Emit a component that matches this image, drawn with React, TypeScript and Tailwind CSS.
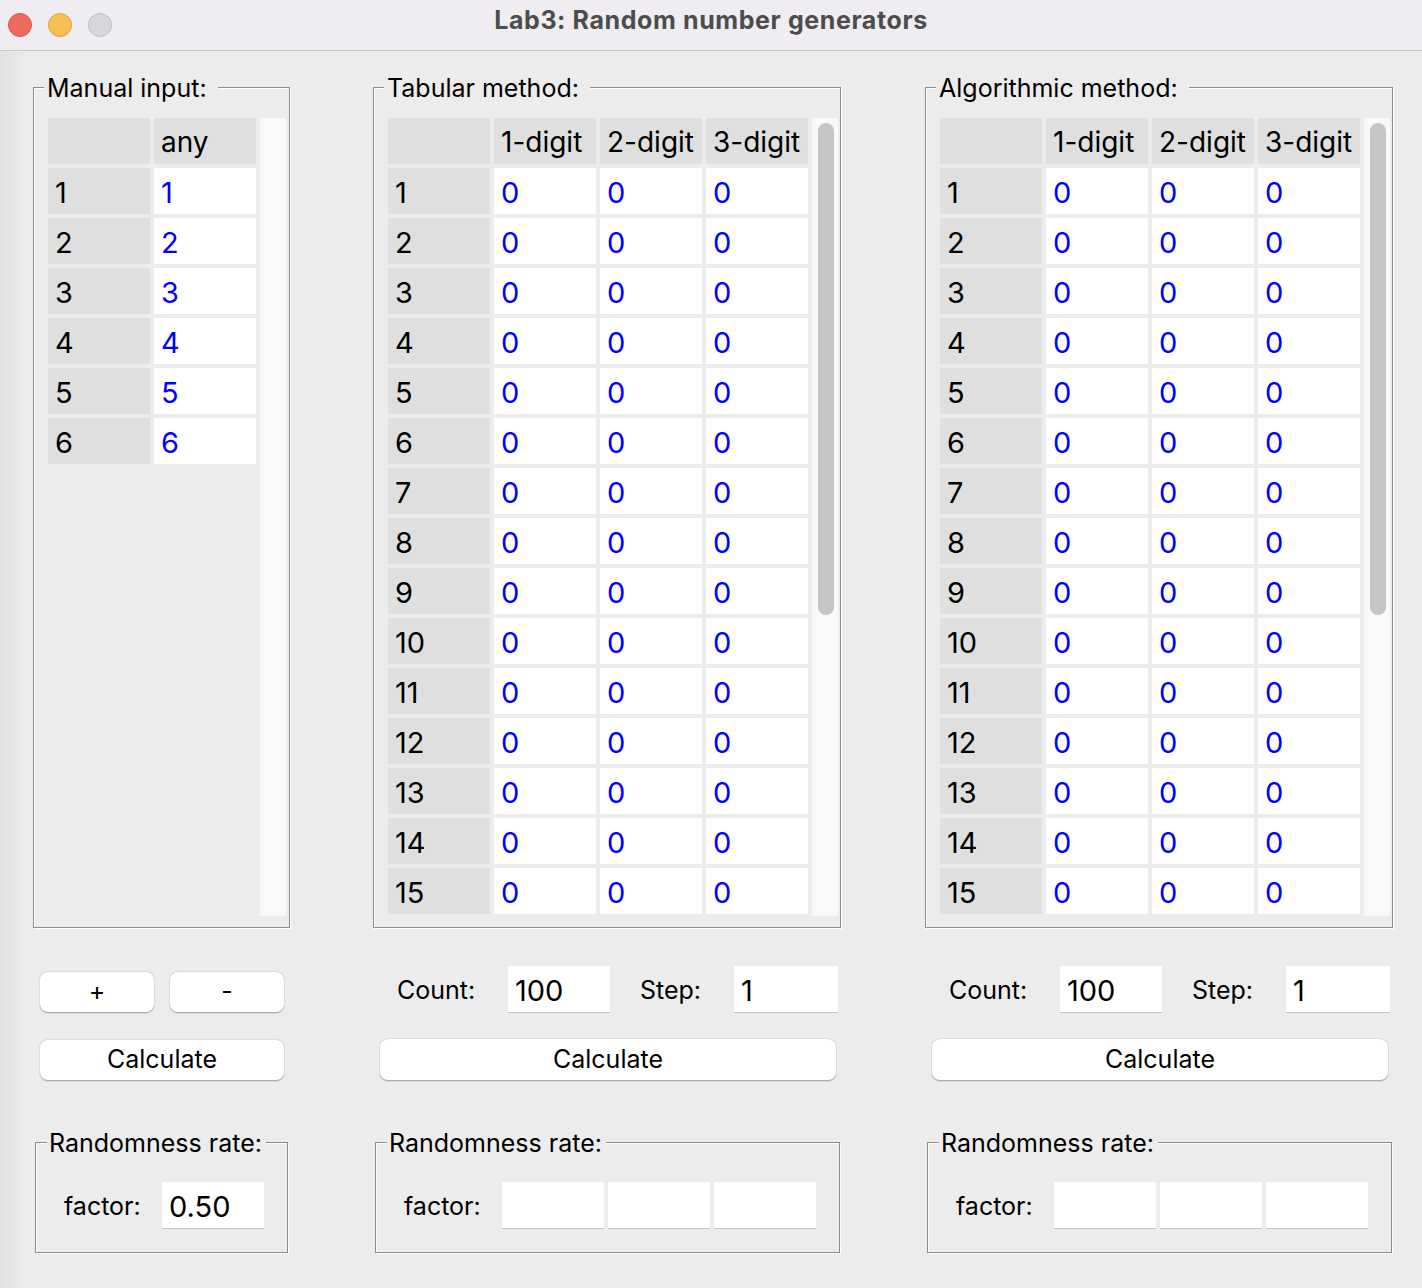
import React from "react";

const GROOVE =
  "border border-[#8c8c8c] shadow-[inset_1px_1px_0_#ffffff,1px_1px_0_#ffffff]";

function GroupBox({
  label,
  className,
  labelClass,
  children,
}: {
  label: string;
  className: string;
  labelClass: string;
  children: React.ReactNode;
}) {
  return (
    <div className={`relative ${GROOVE} ${className}`}>
      <span
        className={`absolute top-[-14px] bg-[#ececec] text-[25px] leading-[28px] text-black whitespace-nowrap ${labelClass}`}
      >
        {label}
      </span>
      {children}
    </div>
  );
}

function Cell({
  kind,
  children,
}: {
  kind: "head" | "index" | "data";
  children?: React.ReactNode;
}) {
  const bg = kind === "data" ? "bg-white text-[#0000ff]" : "bg-[#dfdfdf] text-black";
  return (
    <div className={`h-[46px] overflow-hidden pl-[7px] text-[29px] leading-[49px] ${bg}`}>
      {children}
    </div>
  );
}

function Table({
  headers,
  rows,
  thumb,
}: {
  headers: string[];
  rows: string[][];
  thumb: boolean;
}) {
  const cols = headers.length;
  const gridCols = cols === 2 ? "grid-cols-[102px_102px]" : "grid-cols-[102px_102px_102px_102px]";
  return (
    <div className="flex h-[798px]">
      <div className={`grid ${gridCols} auto-rows-[46px] gap-[4px] content-start h-[798px] overflow-hidden`}>
        <Cell kind="head" />
        {headers.slice(1).map((h) => (
          <div key={h} className="h-[46px] overflow-hidden pl-[7px] text-[28px] leading-[48px] bg-[#dfdfdf] text-black">
            {h}
          </div>
        ))}
        {rows.map((r, i) => (
          <React.Fragment key={i}>
            <Cell kind="index">{String(i + 1)}</Cell>
            {r.map((v, j) => (
              <Cell key={j} kind="data">
                {v}
              </Cell>
            ))}
          </React.Fragment>
        ))}
      </div>
      <div className="ml-[3px] w-[27px] h-[798px] bg-[#f9f9f9] border-l border-[#eeeeee] pt-[5px] pl-[6px]">
        {thumb && <div className="w-[16px] h-[492px] rounded-full bg-[#c5c5c5]" />}
      </div>
    </div>
  );
}

function Button({ className, children }: { className: string; children: React.ReactNode }) {
  return (
    <div
      className={`flex items-center justify-center bg-white rounded-[8px] shadow-[0_0.5px_1.5px_rgba(0,0,0,0.35)] text-[25px] text-black ${className}`}
    >
      {children}
    </div>
  );
}

function Field({ className, value }: { className: string; value?: string }) {
  return (
    <div
      className={`h-[46px] overflow-hidden bg-white pl-[7px] text-[29px] leading-[49px] text-black shadow-[0_1px_0.5px_rgba(0,0,0,0.18)] ${className}`}
    >
      {value}
    </div>
  );
}

function MethodColumn({ title, className }: { title: string; className: string }) {
  const rows = Array.from({ length: 15 }, () => ["0", "0", "0"]);
  return (
    <div className={`flex flex-col w-[468px] ${className}`}>
      <GroupBox label={title} className="w-[468px] h-[841px] pt-[30px] pl-[14px]" labelClass="left-[10px] pl-[3px] pr-[11px]">
        <Table headers={["", "1-digit", "2-digit", "3-digit"]} rows={rows} thumb />
      </GroupBox>
      <div className="flex items-center mt-[38px] h-[46px]">
        <span className="ml-[24px] w-[111px] pt-[3px] text-[25px] text-black">Count:</span>
        <Field className="w-[102px]" value="100" />
        <span className="ml-[30px] w-[94px] pt-[3px] text-[25px] text-black">Step:</span>
        <Field className="w-[104px]" value="1" />
      </div>
      <Button className="mt-[27px] ml-[7px] w-[456px] h-[41px]">Calculate</Button>
      <GroupBox label="Randomness rate:" className="mt-[62px] ml-[2px] w-[465px] h-[111px]" labelClass="left-[11px] pl-[2px] pr-[4px]">
        <div className="flex items-center pt-[39px]">
          <span className="ml-[28px] w-[98px] pt-[4px] text-[25px] text-black">factor:</span>
          <div className="flex gap-[4px]">
            <Field className="w-[102px]" />
            <Field className="w-[102px]" />
            <Field className="w-[102px]" />
          </div>
        </div>
      </GroupBox>
    </div>
  );
}

export default function App() {
  const manualRows = ["1", "2", "3", "4", "5", "6"].map((v) => [v]);
  return (
    <div className="w-[1422px] h-[1288px] overflow-hidden bg-[#ececec] font-['Inter','Liberation_Sans',sans-serif]">
      <div className="relative h-[51px] bg-[#efedf1] border-b border-[#c9c9c9] flex items-center pl-[8px] gap-[16px]">
        <div className="w-[24px] h-[24px] rounded-full bg-[#ee6a5e] border border-[#d7574c]" />
        <div className="w-[24px] h-[24px] rounded-full bg-[#f6bf4f] border border-[#d9a23d]" />
        <div className="w-[24px] h-[24px] rounded-full bg-[#d7d6d9] border border-[#bebdc0]" />
        <div className="absolute inset-0 flex items-center justify-center pb-[8px] text-[25px] tracking-[0.6px] font-bold text-[#4c4c4c]">
          Lab3: Random number generators
        </div>
      </div>
      <div className="flex h-[1237px] pl-[33px] pt-[36px] bg-[linear-gradient(to_right,#e2e2e2,#ececec_28px)]">
        <div className="flex flex-col w-[257px]">
          <GroupBox label="Manual input:" className="w-[257px] h-[841px] pt-[30px] pl-[14px]" labelClass="left-[10px] pl-[3px] pr-[11px]">
            <Table headers={["", "any"]} rows={manualRows} thumb={false} />
          </GroupBox>
          <div className="flex mt-[44px] ml-[7px] gap-[16px]">
            <Button className="w-[114px] h-[40px]">+</Button>
            <Button className="w-[114px] h-[40px]">-</Button>
          </div>
          <Button className="mt-[28px] ml-[7px] w-[244px] h-[40px]">Calculate</Button>
          <GroupBox label="Randomness rate:" className="mt-[62px] ml-[2px] w-[253px] h-[111px]" labelClass="left-[11px] pl-[2px] pr-[4px]">
            <div className="flex items-center pt-[39px]">
              <span className="ml-[28px] w-[98px] pt-[4px] text-[25px] text-black">factor:</span>
              <Field className="w-[102px]" value="0.50" />
            </div>
          </GroupBox>
        </div>
        <MethodColumn title="Tabular method:" className="ml-[83px]" />
        <MethodColumn title="Algorithmic method:" className="ml-[84px]" />
      </div>
    </div>
  );
}
